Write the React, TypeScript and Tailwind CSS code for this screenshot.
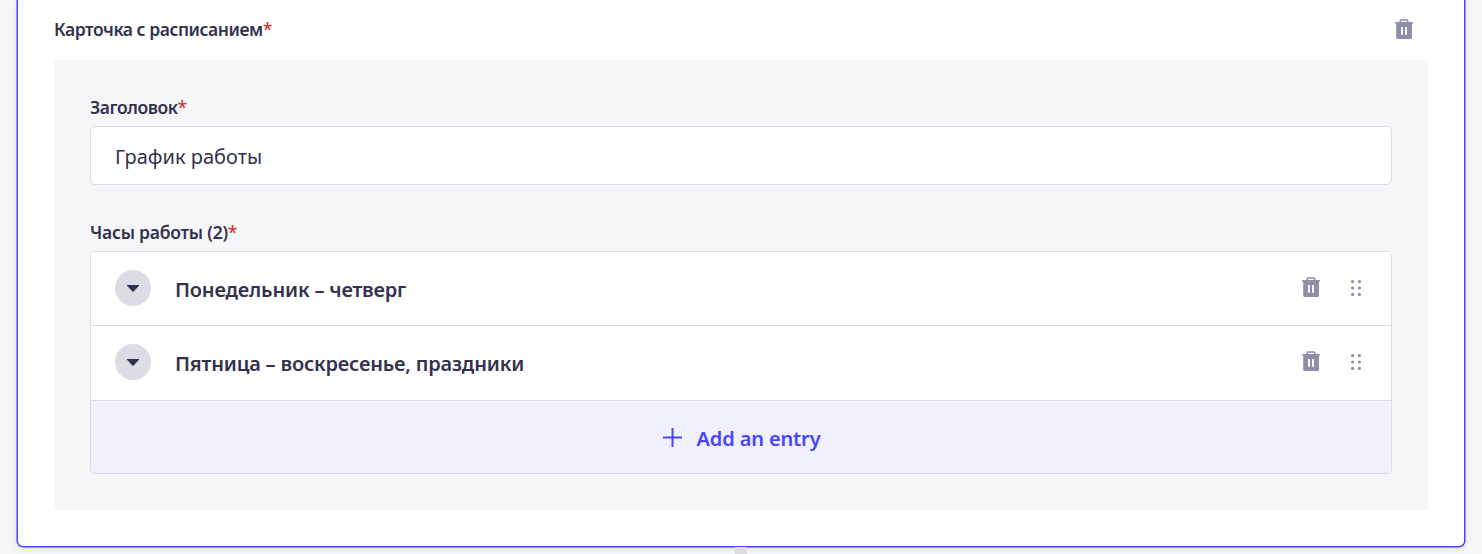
import React from "react";

function Trash() {
  return (
    <svg width="18" height="20" viewBox="0 0 18 20" className="block shrink-0">
      <path
        fill="#8e8ea9"
        fillRule="evenodd"
        d="M4.5 3V1.7C4.5.8 5.1.2 6 .2h6c.9 0 1.5.6 1.5 1.5V3H18v1.5h-1V18.6c0 .8-.5 1.3-1.3 1.3H2.5c-.8 0-1.3-.5-1.3-1.3V4.5H0V3ZM6 3h6V1.7H6ZM6 8v7.7h1.9V8ZM10 8v7.7h1.9V8Z"
      />
    </svg>
  );
}

function Drag() {
  return (
    <svg width="12" height="18" viewBox="0 0 12 18" className="block shrink-0" fill="#8e8ea9">
      {[2.6, 9, 15.4].map((y) => (
        <g key={y}>
          <circle cx="2.6" cy={y} r="1.6" />
          <circle cx="9.4" cy={y} r="1.6" />
        </g>
      ))}
    </svg>
  );
}

function Label({ text, className }: { text: string; className: string }) {
  return (
    <div className="flex h-6 items-center text-[17.5px] leading-6 font-semibold whitespace-nowrap">
      <span className={className}>{text}</span>
      <span className="font-normal text-[#d02b20]">*</span>
    </div>
  );
}

function Entry({ text, className }: { text: string; className: string }) {
  return (
    <div className={"flex items-center border-b border-[#dcdce4] bg-white pr-[29px] pb-[2px] pl-6 " + className}>
      <div className="flex size-9 items-center justify-center rounded-full bg-[#dcdce4] pt-px">
        <svg width="12" height="7" viewBox="0 0 12 7" className="block">
          <path d="M0 0h12v.8L6.4 6.7a.5.5 0 0 1-.8 0L0 .8Z" fill="#32324d" />
        </svg>
      </div>
      <div className="ml-6 flex-1 pt-[4px] text-[20px] leading-7 font-semibold tracking-[-0.19px] whitespace-nowrap">{text}</div>
      <div className="pb-[2px]">
        <Trash />
      </div>
      <div className="ml-[30px]">
        <Drag />
      </div>
    </div>
  );
}

export default function App() {
  return (
    <div className="flex h-[554px] flex-col overflow-hidden bg-[#f6f6f9] pl-[17px] font-['Noto_Sans',sans-serif] text-[#32324d]">
      <section className="h-[547px] w-[1448px] shrink-0 rounded-b-[6px] border-x border-b border-[#4945ff] bg-white px-[36px] shadow-[0_0_0_0.5px_#4945ff,0_1px_6px_rgba(33,33,52,0.12)]">
        <header className="flex h-[60px] items-center justify-between pr-[15px] pb-[2px]">
          <Label text="Карточка с расписанием" className="tracking-[-0.46px]" />
          <Trash />
        </header>
        <div className="h-[450px] bg-[#f6f6f9] px-9 pt-[35px]">
          <Label text="Заголовок" className="tracking-[-0.45px]" />
          <div className="mt-[7px] flex h-[59px] items-center rounded-[5px] border border-[#dcdce4] bg-white px-6 pt-[2px] text-[20px] whitespace-nowrap">
            График работы
          </div>
          <div className="mt-[35px]">
            <Label text="Часы работы (2)" className="tracking-[-0.24px]" />
          </div>
          <div className="mt-[7px] overflow-hidden rounded-[5px] border border-[#dcdce4]">
            <Entry text="Понедельник – четверг" className="h-[74px]" />
            <Entry text="Пятница – воскресенье, праздники" className="h-[75px]" />
            <div className="flex h-[72px] items-center justify-center bg-[#f0f0ff] pl-[2px] text-[20px] font-semibold whitespace-nowrap text-[#4945ff]">
              <svg width="19" height="19" viewBox="0 0 19 19" className="mr-[14px] block">
                <path d="M9.5 0v19M0 9.5h19" stroke="currentColor" strokeWidth="2" />
              </svg>
              <span className="pt-[3px] tracking-[-0.13px]">Add an entry</span>
            </div>
          </div>
        </div>
      </section>
      <div className="ml-[718px] h-3 w-3 shrink-0 bg-[#dcdce4]" />
    </div>
  );
}
